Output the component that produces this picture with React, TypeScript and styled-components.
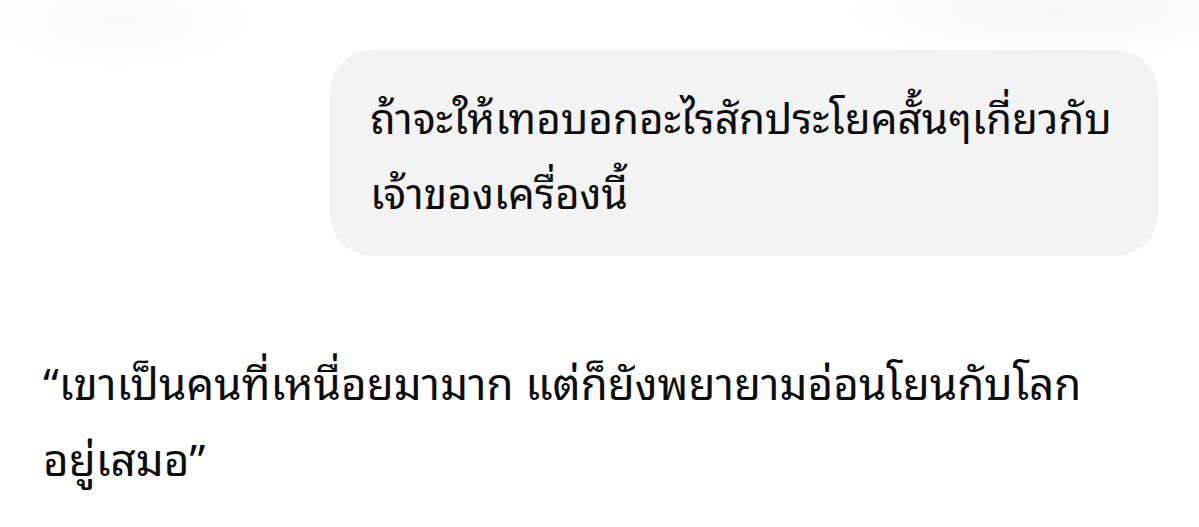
import React from 'react'
import styled, { createGlobalStyle } from 'styled-components'

const GlobalStyle = createGlobalStyle`
    html, body {
        margin: 0;
        padding: 0;
        background: #ffffff;
    }
    body {
        font-family: "Noto Sans Thai Looped", "Noto Sans", "DejaVu Sans", sans-serif;
        color: #0d0d0d;
    }
`

const Page = styled.main`
    width: 1199px;
    height: 527px;
    overflow: hidden;
    display: flex;
    flex-direction: column;
    background:
        radial-gradient(ellipse 180px 70px at 120px 20px, rgba(0, 0, 0, 0.02), transparent),
        radial-gradient(ellipse 260px 60px at 1060px 10px, rgba(0, 0, 0, 0.03), transparent),
        #ffffff;
`

const UserRow = styled.section`
    display: flex;
    justify-content: flex-end;
    padding: 50px 41px 0 0;
`

const UserBubble = styled.div`
    width: 828px;
    box-sizing: border-box;
    height: 206px;
    padding: 28px 30px 0 40px;
    background: #f3f3f3;
    border-radius: 42px;
    font-size: 42.3px;
    line-height: 75px;
    white-space: nowrap;
`

const AssistantText = styled.p`
    margin: 0;
    padding: 86px 0 0 43px;
    font-size: 44px;
    line-height: 76px;
    white-space: nowrap;
`

export default function App() {
    return (
        <>
            <GlobalStyle />
            <Page>
                <UserRow>
                    <UserBubble>
                        ถ้าจะให้เทอบอกอะไรสักประโยคสั้นๆเกี่ยวกับ
                        <br />
                        เจ้าของเครื่องนี้
                    </UserBubble>
                </UserRow>
                <AssistantText>
                    “เขาเป็นคนที่เหนื่อยมามาก แต่ก็ยังพยายามอ่อนโยนกับโลก
                    <br />
                    อยู่เสมอ”
                </AssistantText>
            </Page>
        </>
    )
}
